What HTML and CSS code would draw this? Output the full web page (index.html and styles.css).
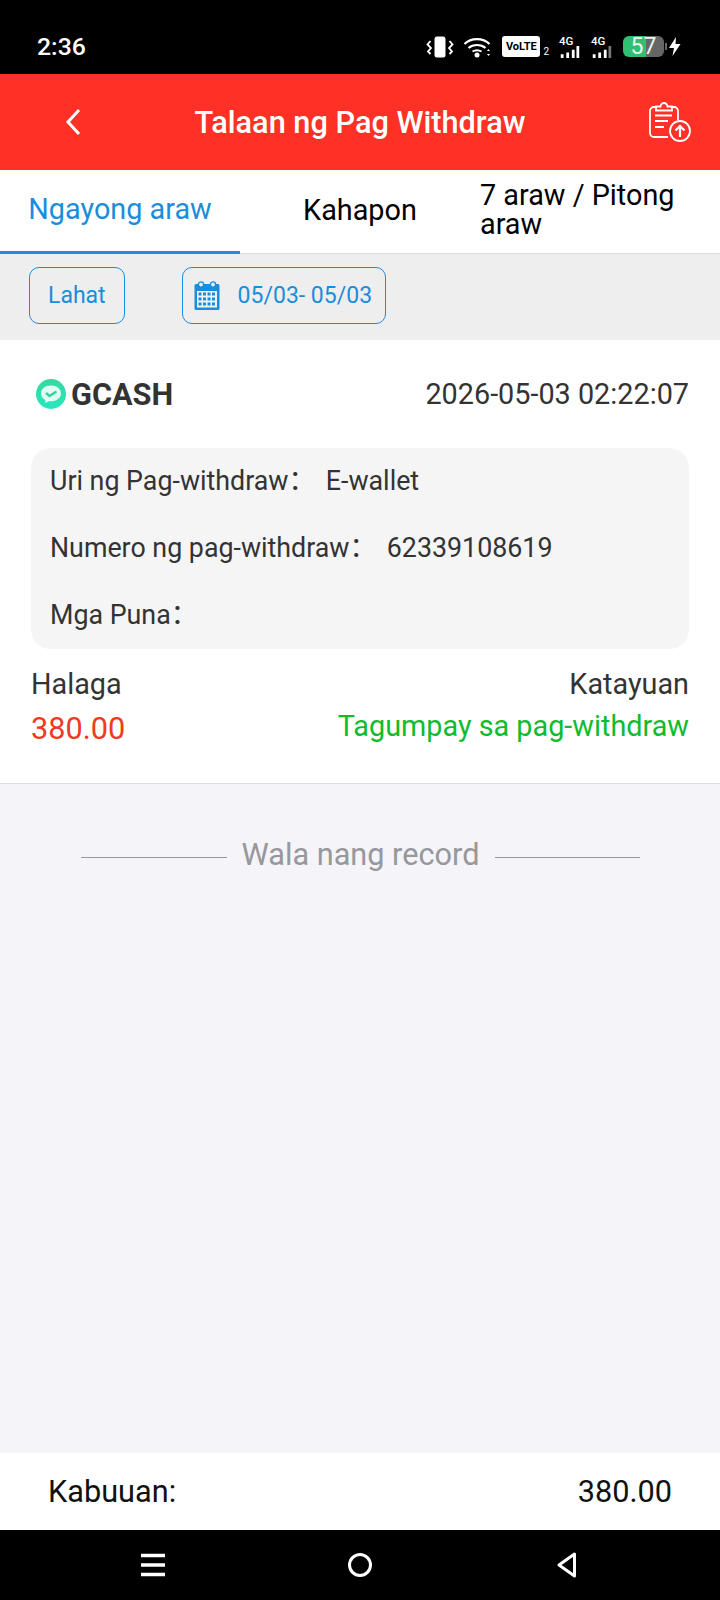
FILE: index.html
```html
<!DOCTYPE html>
<html lang="fil">
<head>
  <meta charset="UTF-8">
  <title>Talaan ng Pag Withdraw</title>
  <link rel="stylesheet" href="styles.css">
</head>
<body>

  <div class="statusbar">
    <span class="clock">2:36</span>
    <div class="status-icons">
      <svg class="ic-vibrate" width="28" height="22" viewBox="0 0 28 22">
        <rect x="8.500" y="0.500" width="11" height="21" rx="2.500" fill="#fff"/>
        <path d="M4.500 5 L1.500 8.500 L5 12 L2 15.500 L4.500 18" fill="none" stroke="#fff" stroke-width="1.800"/>
        <path d="M23.500 5 L26.500 8.500 L23 12 L26 15.500 L23.500 18" fill="none" stroke="#fff" stroke-width="1.800"/>
      </svg>
      <svg class="ic-wifi" width="28" height="22" viewBox="0 0 28 22">
        <path d="M1.500 8 C8 1.500 20 1.500 26.500 8" fill="none" stroke="#fff" stroke-width="2.200"/>
        <path d="M5.500 12 C10 8 18 8 22.500 12" fill="none" stroke="#fff" stroke-width="2.200"/>
        <path d="M9.500 15.500 C12 14 16 14 18.500 15.500" fill="none" stroke="#fff" stroke-width="2"/>
        <circle cx="14" cy="19" r="2.500" fill="#fff"/>
        <path d="M24 15 h3 l-1.500 -2z M24 18 h3 l-1.500 2z" fill="#fff"/>
      </svg>
      <span class="volte">VoLTE</span><span class="sim-num">2</span>
      <span class="signal"><span class="net">4G</span>
        <svg width="22" height="13" viewBox="0 0 22 13"><path d="M1 9h3v4H1zM7 7h3v6H7zM13 4h3v9h-3zM18 0h3v13h-3z" fill="#fff"/></svg>
      </span>
      <span class="signal"><span class="net">4G</span>
        <svg width="22" height="13" viewBox="0 0 22 13"><path d="M1 9h3v4H1zM7 7h3v6H7zM13 4h3v9h-3z" fill="#fff"/><path d="M18 0h3v13h-3z" fill="#777"/></svg>
      </span>
      <div class="battery"><span class="battery-num">57</span></div>
      <svg class="ic-bolt" width="13" height="19" viewBox="0 0 13 19"><path d="M8 0 L1 11 H6 L4.500 19 L12.500 7 H7.500z" fill="#fff"/></svg>
    </div>
  </div>

  <div class="topbar">
    <svg class="back" width="18" height="28" viewBox="0 0 18 28"><path d="M15 2 L4 14 L15 26" fill="none" stroke="#fff" stroke-width="3"/></svg>
    <h1>Talaan ng Pag Withdraw</h1>
    <svg class="upload" width="42" height="42" viewBox="0 0 42 42">
      <path d="M7 6 H5 a4 4 0 0 0 -4 4 V32 a4 4 0 0 0 4 4 H19" fill="none" stroke="#fff" stroke-width="1.800"/>
      <path d="M23 6 H25 a4 4 0 0 1 4 4 V19" fill="none" stroke="#fff" stroke-width="1.800"/>
      <path d="M7 9.500 V5.500 H11.500 a3.500 3.500 0 0 1 7 0 H23 V9.500z" fill="none" stroke="#fff" stroke-width="1.800"/>
      <path d="M6 14.500H23 M6 20H19 M6 26H15" stroke="#fff" stroke-width="2"/>
      <circle cx="31" cy="30" r="10" fill="none" stroke="#fff" stroke-width="1.800"/>
      <path d="M31 36 V25 M26.500 29.500 L31 25 L35.500 29.500" fill="none" stroke="#fff" stroke-width="2.200"/>
    </svg>
  </div>

  <div class="tabs">
    <div class="tab active">Ngayong araw</div>
    <div class="tab">Kahapon</div>
    <div class="tab tab-left">7 araw / Pitong araw</div>
  </div>

  <div class="filters">
    <div class="chip">Lahat</div>
    <div class="chip chip-date">
      <svg width="27" height="29" viewBox="0 0 27 29">
        <path d="M2 3 H24 a1.500 1.500 0 0 1 1.500 1.500 V27.500 a1.500 1.500 0 0 1 -1.500 1.500 H2 a1.500 1.500 0 0 1 -1.500 -1.500 V4.500 A1.500 1.500 0 0 1 2 3z" fill="#1a8ddb"/>
        <rect x="3" y="10" width="20" height="16.500" fill="#eef3f8"/>
        <circle cx="7" cy="3.500" r="2.600" fill="#eee" stroke="#1a8ddb" stroke-width="1.400"/>
        <circle cx="19" cy="3.500" r="2.600" fill="#eee" stroke="#1a8ddb" stroke-width="1.400"/>
        <path d="M4.500 11.500h3v3h-3zM9 11.500h3v3H9zM13.500 11.500h3v3h-3zM18 11.500h3v3h-3zM4.500 16.500h3v3h-3zM9 16.500h3v3H9zM13.500 16.500h3v3h-3zM18 16.500h3v3h-3zM4.500 21.500h3v3h-3zM9 21.500h3v3H9zM13.500 21.500h3v3h-3zM18 21.500h3v3h-3z" fill="#1a8ddb"/>
      </svg>
      <span>05/03- 05/03</span>
    </div>
  </div>

  <div class="record">
    <div class="record-head">
      <div class="wallet">
        <svg width="32" height="32" viewBox="0 0 32 32">
          <defs>
            <linearGradient id="gc" x1="0" y1="0" x2="0" y2="1">
              <stop offset="0" stop-color="#35d8a0"/>
              <stop offset="1" stop-color="#25e8c0"/>
            </linearGradient>
          </defs>
          <circle cx="16" cy="16" r="15" fill="url(#gc)"/>
          <path d="M16 7.500 C10 7.500 6 11 6 15.500 C6 18.500 8 20.800 10.500 22 L10 25 L14 23.200 C20.500 24 26 20.500 26 15.500 C26 11 22 7.500 16 7.500z" fill="#e4fbf3"/>
          <path d="M11 15 L14.500 18 L21.500 13.500" fill="none" stroke="#2bd6a4" stroke-width="2.400"/>
        </svg>
        <span>GCASH</span>
      </div>
      <div class="date">2026-05-03 02:22:07</div>
    </div>

    <div class="details">
      <div class="line"><span>Uri ng Pag-withdraw：</span><span>E-wallet</span></div>
      <div class="line"><span>Numero ng pag-withdraw：</span><span>62339108619</span></div>
      <div class="line"><span>Mga Puna：</span></div>
    </div>

    <div class="summary">
      <div>
        <div class="sum-label">Halaga</div>
        <div class="amount">380.00</div>
      </div>
      <div class="sum-right">
        <div class="sum-label">Katayuan</div>
        <div class="state">Tagumpay sa pag-withdraw</div>
      </div>
    </div>
  </div>

  <div class="main">
    <div class="no-more"><i></i><span>Wala nang record</span><i></i></div>
  </div>

  <div class="total">
    <span>Kabuuan:</span>
    <span>380.00</span>
  </div>

  <div class="navbar">
    <svg width="26" height="26" viewBox="0 0 26 26"><path d="M1 3.500H25M1 13H25M1 22.500H25" stroke="#fff" stroke-width="3.400"/></svg>
    <svg width="26" height="26" viewBox="0 0 26 26"><circle cx="13" cy="13" r="10.500" fill="none" stroke="#fff" stroke-width="3"/></svg>
    <svg width="26" height="28" viewBox="0 0 26 28"><path d="M20.500 3 V25 L5 14z" fill="none" stroke="#fff" stroke-width="3" stroke-linejoin="round"/></svg>
  </div>

</body>
</html>
```

FILE: styles.css
```css
* {
  box-sizing: border-box;
}

body {
  margin: 0;
  width: 720px;
  height: 1600px;
  font-family: Roboto, "Noto Sans CJK SC", Arial, sans-serif;
  background: #f4f4f9;
  display: flex;
  flex-direction: column;
  overflow: hidden;
}

.statusbar {
  height: 74px;
  background: #000;
  color: #fff;
  display: flex;
  justify-content: space-between;
  align-items: center;
  padding: 19px 39px 0 37px;
  flex-shrink: 0;
}

.clock {
  font-size: 24.800px;
  font-weight: 500;
}

.status-icons {
  display: flex;
  align-items: center;
}

.ic-wifi {
  margin-left: 9px;
}

.volte {
  margin-left: 11px;
  background: #fff;
  color: #000;
  font-size: 11px;
  font-weight: 700;
  width: 38px;
  height: 21px;
  border-radius: 3px;
  display: flex;
  align-items: center;
  justify-content: center;
}

.sim-num {
  font-size: 10px;
  align-self: flex-end;
  margin: 0 0 1px 3px;
}

.signal {
  display: block;
  margin-left: 10px;
  width: 22px;
  height: 22px;
  position: relative;
}

.signal + .signal {
  margin-left: 10px;
}

.net {
  display: block;
  font-size: 11.500px;
  font-weight: 500;
  line-height: 10px;
}

.signal svg {
  position: absolute;
  left: 0;
  bottom: 0;
  width: 22px;
  height: 12px;
}

.battery {
  margin-left: 10px;
  width: 41px;
  height: 21px;
  border-radius: 6px;
  background: linear-gradient(to right, #2fc072 57%, #666 57%);
  display: flex;
  align-items: center;
  justify-content: center;
  position: relative;
}

/* little nub on the battery */
.battery::after {
  content: "";
  position: absolute;
  right: -3px;
  top: 7px;
  width: 2px;
  height: 7px;
  background: #666;
}

.battery-num {
  font-size: 23px;
  line-height: 21px;
  font-weight: 400;
  color: #e8f5ee;
}

.ic-bolt {
  margin-left: 4px;
}

.topbar {
  height: 96px;
  background: #ff3126;
  display: flex;
  align-items: center;
  padding: 0 29px 0 64px;
  flex-shrink: 0;
}

.topbar h1 {
  margin: 0;
  flex: 1;
  text-align: center;
  font-size: 30.700px;
  font-weight: 500;
  color: #fff;
  padding-right: 11px;
}

.tabs {
  height: 84px;
  background: #fff;
  display: flex;
  border-bottom: 1px solid #d9d9d9;
  flex-shrink: 0;
}

.tab {
  width: 240px;
  display: flex;
  align-items: center;
  justify-content: center;
  font-size: 28.800px;
  color: #000;
  line-height: 29px;
  padding-bottom: 3px;
}

.tab-left {
  justify-content: flex-start;
  padding: 0 30px 4px 0;
}

.tab.active {
  color: #1a8ddb;
  border-bottom: 3px solid #1a8ddb;
  margin-bottom: -1px;
  padding-bottom: 2px;
}

.filters {
  height: 86px;
  background: #eee;
  display: flex;
  align-items: center;
  padding: 0 0 3px 29px;
  gap: 57px;
  flex-shrink: 0;
}

.chip {
  height: 57px;
  padding: 0 18px;
  border: 1px solid #1a8ddb;
  border-radius: 10px;
  color: #1a8ddb;
  font-size: 23px;
  display: flex;
  align-items: center;
}

.chip-date {
  padding: 0 13px 0 11px;
  gap: 17px;
}

.record {
  height: 444px;
  background: #fff;
  border-bottom: 1px solid #ddd;
  padding: 0 31px;
  flex-shrink: 0;
}

.record-head {
  height: 108px;
  display: flex;
  justify-content: space-between;
  align-items: center;
}

.wallet {
  display: flex;
  align-items: center;
  gap: 4px;
  margin-left: 4px;
  font-size: 30.700px;
  font-weight: 700;
  color: #333;
}

.date {
  font-size: 28.800px;
  color: #333;
}

.details {
  height: 201px;
  background: #f5f5f6;
  border-radius: 20px;
  padding: 0 19px;
  font-size: 26.800px;
  color: #333;
}

.line {
  height: 67px;
  line-height: 66px;
  display: flex;
  gap: 10.500px;
}

.summary {
  display: flex;
  justify-content: space-between;
  padding-top: 15px;
}

.sum-label {
  font-size: 28.800px;
  color: #333;
  line-height: 40px;
}

.sum-right {
  text-align: right;
}

.amount {
  font-size: 30.700px;
  color: #f03a22;
  line-height: 50px;
}

.state {
  font-size: 28.800px;
  color: #0ebc2e;
  line-height: 44px;
}

.main {
  flex: 1;
}

.no-more {
  margin: 53px 80px 0 81px;
  display: flex;
  align-items: center;
  gap: 15px;
  font-size: 30.700px;
  color: #97979c;
}

.no-more i {
  flex: 1;
  height: 1px;
  margin-top: 5px;
  background: #97979c;
}

.total {
  height: 77px;
  background: #fff;
  display: flex;
  justify-content: space-between;
  align-items: center;
  padding: 0 48px;
  font-size: 30.700px;
  color: #111;
  flex-shrink: 0;
}

.navbar {
  height: 70px;
  background: #000;
  display: flex;
  justify-content: center;
  align-items: center;
  gap: 181px;
  flex-shrink: 0;
}
```
